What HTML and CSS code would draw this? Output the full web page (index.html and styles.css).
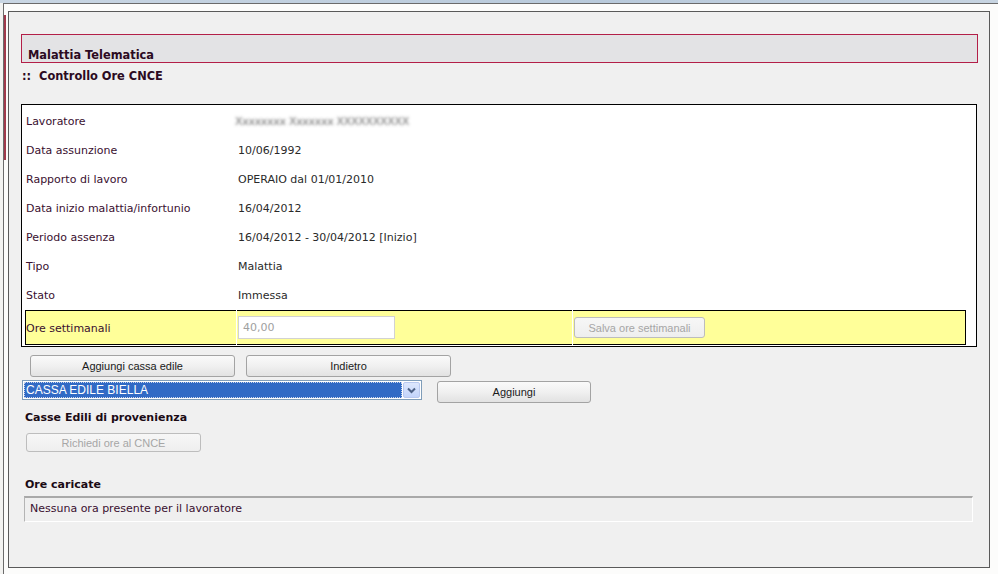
FILE: index.html
```html
<!DOCTYPE html>
<html lang="it">
<head>
<meta charset="utf-8">
<title>Malattia Telematica</title>
<link rel="stylesheet" href="styles.css">
</head>
<body>
<div class="topbar"></div>
<div class="window">
  <div class="panel">
    <div class="header">Malattia Telematica</div>
    <div class="subtitle">::&nbsp; Controllo Ore CNCE</div>

    <div class="info">
      <div class="row"><div class="lbl">Lavoratore</div><div class="val"><span class="blur">Xxxxxxxx Xxxxxxx XXXXXXXXXX</span></div></div>
      <div class="row"><div class="lbl">Data assunzione</div><div class="val">10/06/1992</div></div>
      <div class="row"><div class="lbl">Rapporto di lavoro</div><div class="val">OPERAIO dal 01/01/2010</div></div>
      <div class="row"><div class="lbl">Data inizio malattia/infortunio</div><div class="val">16/04/2012</div></div>
      <div class="row"><div class="lbl">Periodo assenza</div><div class="val">16/04/2012 - 30/04/2012 [Inizio]</div></div>
      <div class="row"><div class="lbl">Tipo</div><div class="val">Malattia</div></div>
      <div class="row"><div class="lbl">Stato</div><div class="val">Immessa</div></div>
      <div class="row yellow">
        <div class="ycell first">Ore settimanali</div>
        <div class="ycell"><div class="input">40,00</div></div>
        <div class="ycell last"><div class="btn disabled salva">Salva ore settimanali</div></div>
      </div>
    </div>

    <div class="btnrow">
      <div class="btn wide">Aggiungi cassa edile</div>
      <div class="btn wide">Indietro</div>
    </div>

    <div class="selrow">
      <div class="select">
        <div class="selected">CASSA EDILE BIELLA</div>
        <div class="arrow">
          <svg width="9" height="7" viewBox="0 0 9 7"><path d="M1 1.5 L4.5 5 L8 1.5" fill="none" stroke="#4d6185" stroke-width="2"/></svg>
        </div>
      </div>
      <div class="btn add">Aggiungi</div>
    </div>

    <div class="section">Casse Edili di provenienza</div>
    <div class="btn disabled richiedi">Richiedi ore al CNCE</div>

    <div class="section ore">Ore caricate</div>
    <div class="empty">Nessuna ora presente per il lavoratore</div>
  </div>
</div>
</body>
</html>
```
FILE: styles.css
```css
html, body {
  margin: 0;
  padding: 0;
}
body {
  background: #f3f3f1;
  font-family: "DejaVu Sans", Verdana, sans-serif;
  font-size: 11px;
  width: 998px;
  height: 574px;
  overflow: hidden;
}
.topbar {
  height: 3px;
  background: linear-gradient(to right, #c9d6e3, #b9cadb 60%, #c7d4e1);
}
.window {
  position: relative;
  margin-left: 3px;
  border-top: 1px solid #6b6b6b;
  border-left: 1px solid #6b6b6b;
  background: #fcfcfb;
  padding: 7px 0 10px 4px;
}
.window::before {
  content: "";
  position: absolute;
  left: 0;
  top: 11px;
  width: 2px;
  height: 145px;
  background: #a03a4c;
}
.panel {
  box-sizing: border-box;
  width: 982px;
  height: 557px;
  border: 1px solid #5a5a5a;
  background: #f0f0f0;
  padding-top: 22px;
}
.header {
  box-sizing: border-box;
  margin-left: 12px;
  width: 957px;
  height: 29px;
  border: 1px solid #b31f48;
  background: #e3e3e5;
  padding: 13px 0 0 6px;
  line-height: 14px;
  font-weight: bold;
  font-size: 11.4px;
  color: #2c0a22;
}
.subtitle {
  margin: 6px 0 0 13px;
  line-height: 14px;
  font-weight: bold;
  font-size: 11.4px;
  color: #2c0a22;
}
.info {
  box-sizing: border-box;
  margin: 21px 0 0 12px;
  width: 956px;
  height: 243px;
  border: 1px solid #000;
  background: #fff;
  padding: 2px 10px 1px 3px;
}
.row {
  display: grid;
  grid-template-columns: 211px 335px 1fr;
  column-gap: 1px;
  height: 29px;
  align-items: center;
}
.lbl {
  padding-left: 1px;
  color: #3a1030;
}
.val {
  padding-left: 1px;
  color: #2a2a2a;
}
.blur {
  color: transparent;
  text-shadow: 0 0 3px rgba(60, 60, 60, 0.75);
  letter-spacing: -0.3px;
  margin-left: -3px;
}
.row.yellow {
  height: 35px;
  align-items: stretch;
}
.ycell {
  background: #ffff99;
  border-top: 1px solid #000;
  border-bottom: 1px solid #000;
  display: flex;
  align-items: center;
  color: #3a1030;
}
.ycell.first {
  border-left: 1px solid #000;
  padding-top: 1px;
}
.ycell.last {
  border-right: 1px solid #000;
}
.input {
  box-sizing: border-box;
  margin-left: 1px;
  width: 157px;
  height: 23px;
  border: 1px solid #d2d2d2;
  background: #fff;
  color: #a0a0a0;
  padding: 0 0 0 4px;
  line-height: 21px;
  font-family: "DejaVu Sans", Verdana, sans-serif;
  font-size: 11px;
}
.btn {
  box-sizing: border-box;
  display: flex;
  align-items: center;
  justify-content: center;
  border: 1px solid #a3a3a3;
  border-radius: 3px;
  background: linear-gradient(#fafafa, #f0f0f0 50%, #e2e2e2);
  font-family: "Liberation Sans", Arial, sans-serif;
  font-size: 11px;
  color: #1a1a1a;
  height: 22px;
}
.btn.disabled {
  color: #a6a6a6;
  border-color: #bdbdbd;
  background: linear-gradient(#f7f7f7, #eeeeee);
}
.salva {
  margin-left: 1px;
  width: 131px;
  height: 21px;
}
.btnrow {
  display: flex;
  gap: 11px;
  margin: 8px 0 0 21px;
}
.btn.wide {
  width: 205px;
}
.selrow {
  display: flex;
  align-items: flex-start;
  gap: 15px;
  margin: 3px 0 0 13px;
}
.select {
  box-sizing: border-box;
  width: 400px;
  height: 20px;
  border: 1px solid #7f9db9;
  background: #fff;
  display: flex;
  padding: 1px;
}
.selected {
  flex: 1;
  background: #316ac5;
  color: #fff;
  font-family: "Liberation Sans", Arial, sans-serif;
  font-size: 12px;
  line-height: 16px;
  padding-left: 2px;
  outline: 1px dotted #c8d4ea;
  outline-offset: -1px;
}
.arrow {
  box-sizing: border-box;
  width: 17px;
  height: 16px;
  margin-left: 1px;
  border: 1px solid #b9c9ef;
  border-radius: 2px;
  background: linear-gradient(#dde7fd, #c3d4fa);
  display: flex;
  align-items: center;
  justify-content: center;
}
.btn.add {
  width: 154px;
  margin-top: 1px;
}
.section {
  margin: 8px 0 0 16px;
  line-height: 14px;
  font-weight: bold;
  color: #1a0a14;
}
.richiedi {
  margin: 8px 0 0 17px;
  width: 175px;
  height: 19px;
}
.section.ore {
  margin-top: 26px;
}
.empty {
  box-sizing: border-box;
  margin: 4px 0 0 15px;
  width: 949px;
  height: 26px;
  border-top: 2px solid #a9a9a9;
  border-left: 1px solid #b4b4b4;
  border-right: 1px solid #fff;
  border-bottom: 1px solid #fff;
  background: #efefef;
  padding-left: 5px;
  line-height: 22px;
  color: #3a1030;
}
```
